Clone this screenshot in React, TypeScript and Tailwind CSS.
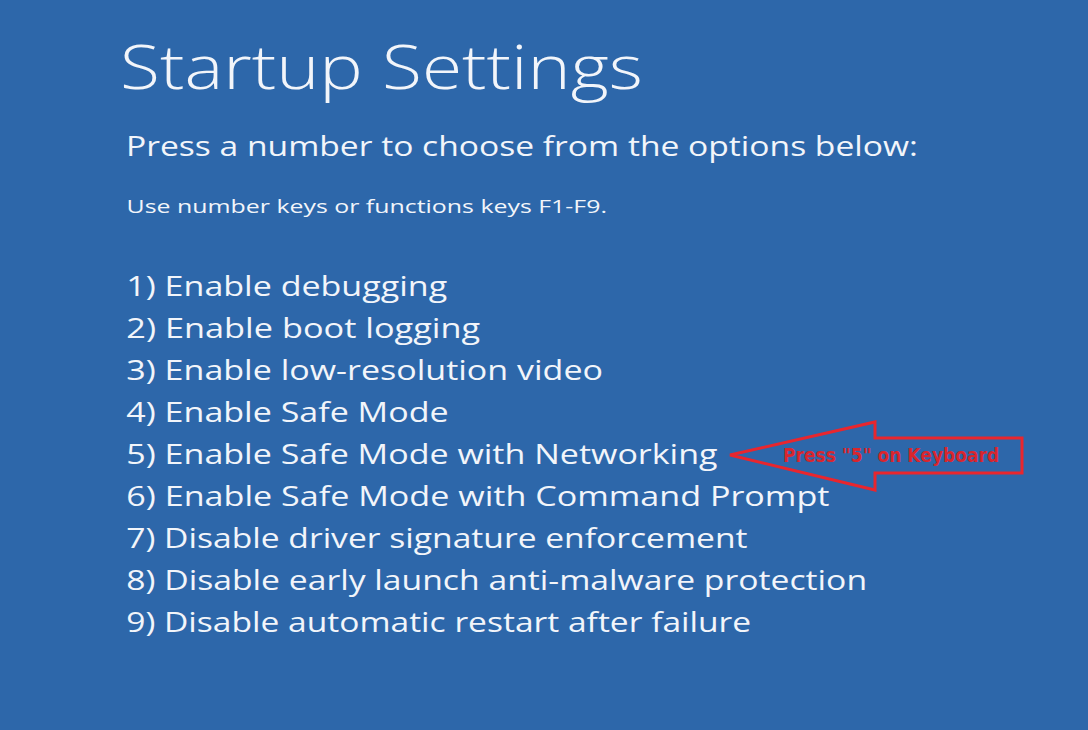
import React from "react";

const items: { t: string; c: string }[] = [
  { t: "1) Enable debugging", c: "scale-x-[1.26]" },
  { t: "2) Enable boot logging", c: "scale-x-[1.27]" },
  { t: "3) Enable low-resolution video", c: "scale-x-[1.26]" },
  { t: "4) Enable Safe Mode", c: "scale-x-[1.26]" },
  { t: "5) Enable Safe Mode with Networking", c: "scale-x-[1.26]" },
  { t: "6) Enable Safe Mode with Command Prompt", c: "scale-x-[1.263]" },
  { t: "7) Disable driver signature enforcement", c: "scale-x-[1.245]" },
  { t: "8) Disable early launch anti-malware protection", c: "scale-x-[1.248]" },
  { t: "9) Disable automatic restart after failure", c: "scale-x-[1.243]" },
];

export default function App() {
  return (
    <div
      className="relative w-[1088px] h-[730px] overflow-hidden bg-[#2d67aa] text-[#f2f5fa]"
      style={{ fontFamily: '"Open Sans", "Noto Sans", sans-serif' }}
    >
      <div className="flex flex-col pl-[120px] pt-[28px]">
        <h1 className="origin-left scale-x-[1.22] text-[60px] leading-[76px] font-light">Startup Settings</h1>
        <p className="mt-[21px] pl-[5px] origin-left scale-x-[1.2] text-[28px] leading-[40px] font-normal">
          Press a number to choose from the options below:
        </p>
        <p className="mt-[28px] pl-[5px] origin-left scale-x-[1.31] text-[19px] leading-[26px]">
          Use number keys or functions keys F1-F9.
        </p>
        <ul className="mt-[46px] flex flex-col">
          {items.map((it) => (
            <li key={it.t} className={"pl-[5px] origin-left text-[27px] leading-[42px] " + it.c}>
              {it.t}
            </li>
          ))}
        </ul>
      </div>

      <div className="absolute left-[726px] top-[418px] w-[300px] h-[76px]">
        <svg width="300" height="76" viewBox="0 0 300 76" className="absolute inset-0">
          <polygon
            points="4,37 149,4 149,20 296,20 296,55 149,55 149,72"
            fill="none"
            stroke="#e8262e"
            strokeWidth="3"
            strokeLinejoin="miter"
          />
        </svg>
        <span
          className="absolute left-[57px] top-[24px] text-[19px] leading-[26px] font-bold text-[#d8262e] whitespace-nowrap"
          style={{ fontFamily: '"Liberation Sans Narrow", "DejaVu Sans Condensed", sans-serif' }}
        >
          Press "5" on Keyboard
        </span>
      </div>
    </div>
  );
}
